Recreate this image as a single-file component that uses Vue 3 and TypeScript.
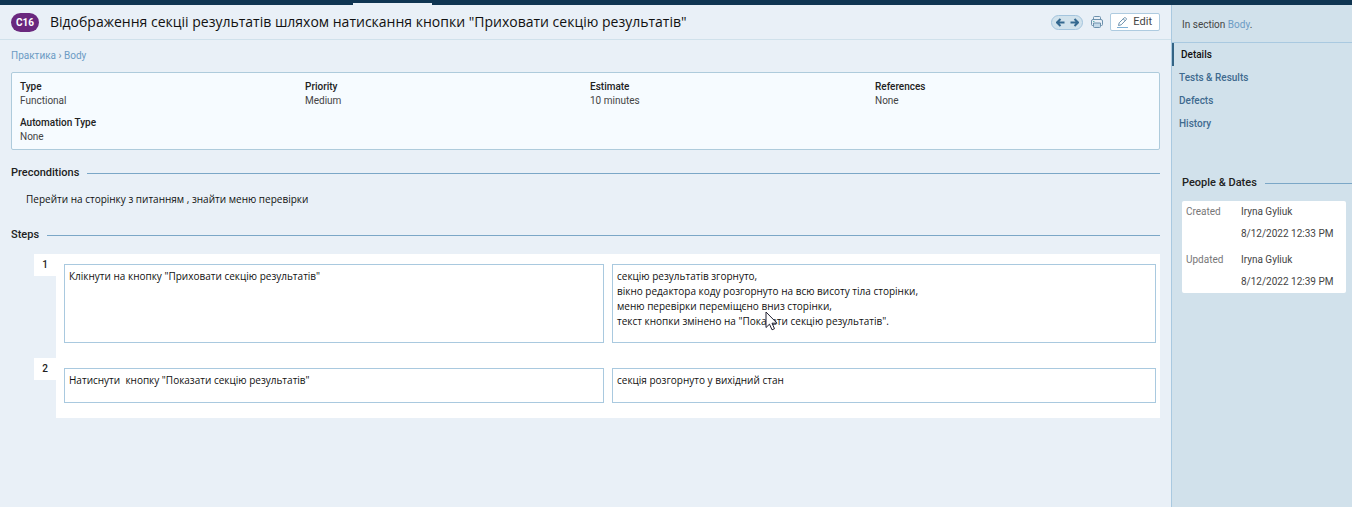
<script setup lang="ts">
import { ref } from 'vue'

interface Field { label: string; value: string }
interface Step { action: string; expected: string[]; tall?: boolean }

const fields: Field[] = [
  { label: 'Type', value: 'Functional' },
  { label: 'Priority', value: 'Medium' },
  { label: 'Estimate', value: '10 minutes' },
  { label: 'References', value: 'None' },
  { label: 'Automation Type', value: 'None' },
]

const steps: Step[] = [
  {
    action: 'Клікнути на кнопку "Приховати секцію результатів"',
    expected: [
      'секцію результатів згорнуто,',
      'вікно редактора коду розгорнуто на всю висоту тіла сторінки,',
      'меню перевірки переміщєно вниз сторінки,',
      'текст кнопки змінено на "Показати секцію результатів".',
    ],
    tall: true,
  },
  {
    action: 'Натиснути  кнопку "Показати секцію результатів"',
    expected: ['секція розгорнуто у вихідний стан'],
  },
]

const tabs: string[] = ['Details', 'Tests & Results', 'Defects', 'History']
const activeTab = ref('Details')

const history = [
  { label: 'Created', person: 'Iryna Gyliuk', date: '8/12/2022 12:33 PM' },
  { label: 'Updated', person: 'Iryna Gyliuk', date: '8/12/2022 12:39 PM' },
]
</script>

<template>
  <div class="page">
    <div class="topbar"><span class="topbar-tab"></span></div>
    <div class="columns">
      <main class="main">
        <header class="header">
          <span class="badge">C16</span>
          <h1 class="title">Відображення секціі результатів шляхом натискання кнопки "Приховати секцію результатів"</h1>
          <div class="pager">
            <button type="button" class="icon-button" aria-label="Previous">
              <svg width="9" height="9" viewBox="0 0 9 9"><path d="M8.5 4.5H1M4.5 1L1 4.5L4.5 8" /></svg>
            </button>
            <button type="button" class="icon-button" aria-label="Next">
              <svg width="9" height="9" viewBox="0 0 9 9"><path d="M.5 4.5H8M4.5 1L8 4.5L4.5 8" /></svg>
            </button>
          </div>
          <button type="button" class="icon-button print" aria-label="Print">
            <svg width="12" height="12" viewBox="0 0 12 12">
              <path d="M2.5 3.5V1.5Q2.5.5 3.5.5H8.5Q9.5.5 9.5 1.5V3.5" />
              <path d="M2.5 9.5H1.5Q.5 9.5.5 8.5V5Q.5 3.5 2 3.5H10Q11.5 3.5 11.5 5V8.5Q11.5 9.5 10.5 9.5H9.5" />
              <path class="sheet" d="M2.5 7H9.5V10.5Q9.5 11.5 8.5 11.5H3.5Q2.5 11.5 2.5 10.5Z" />
              <path class="light" d="M2 5.5H3.5" />
            </svg>
          </button>
          <button type="button" class="edit">
            <svg width="11" height="11" viewBox="0 0 11 11">
              <path d="M1.5 8.5L2.2 5.8L7.3.8Q8 .3 8.7.9L9.2 1.4Q9.7 2.1 9.2 2.7L4.2 7.8ZM6.3 1.9L8.2 3.8" />
              <path class="base" d="M0 10.5H11" />
            </svg>
            Edit
          </button>
        </header>

        <div class="content">
          <nav class="crumbs" aria-label="Breadcrumb">
            <a href="#">Практика</a> › <a href="#">Body</a>
          </nav>

          <dl class="fields">
            <div v-for="field in fields" :key="field.label">
              <dt>{{ field.label }}</dt>
              <dd>{{ field.value }}</dd>
            </div>
          </dl>

          <h2 class="section">Preconditions</h2>
          <p class="precondition">Перейти на сторінку з питанням , знайти меню перевірки</p>

          <h2 class="section">Steps</h2>
          <ol class="steps">
            <li v-for="(step, i) in steps" :key="i" class="step">
              <span class="number">{{ i + 1 }}</span>
              <div class="step-body">
                <div class="box" :class="{ tall: step.tall }">{{ step.action }}</div>
                <div class="box">
                  <div v-for="line in step.expected" :key="line">{{ line }}</div>
                </div>
              </div>
            </li>
          </ol>
        </div>
      </main>

      <aside class="sidebar">
        <p class="location">In section <a href="#">Body</a>.</p>
        <nav class="tabs" aria-label="Test case">
          <a
            v-for="tab in tabs"
            :key="tab"
            href="#"
            :class="{ active: tab === activeTab }"
            @click.prevent="activeTab = tab"
          >{{ tab }}</a>
        </nav>
        <h2 class="section people">People &amp; Dates</h2>
        <table class="dates">
          <tbody v-for="entry in history" :key="entry.label">
            <tr>
              <th scope="row">{{ entry.label }}</th>
              <td>{{ entry.person }}</td>
            </tr>
            <tr>
              <td></td>
              <td>{{ entry.date }}</td>
            </tr>
          </tbody>
        </table>
      </aside>
    </div>
    <svg class="pointer" width="13" height="20" viewBox="0 0 13 20" aria-hidden="true">
      <path d="M1 1V16.5L4.5 13.2L7 18.8L9.5 17.7L7 12.2H12Z" />
    </svg>
  </div>
</template>

<style>
body {
  margin: 0;
  background: #e9f0f7;
}
</style>

<style scoped>
* {
  box-sizing: border-box;
}
.page {
  position: relative;
  display: flex;
  flex-direction: column;
  min-height: 100vh;
  color: #444;
  font: 10px/14px Roboto, "Open Sans", sans-serif;
}
a {
  color: #6c9bc4;
  text-decoration: none;
}
button {
  font: inherit;
  color: inherit;
  cursor: pointer;
}
.topbar {
  display: flex;
  align-items: flex-end;
  height: 5px;
  padding-left: 353px;
  background: #0f3552;
}
.topbar-tab {
  width: 79px;
  height: 2px;
  background: #e9f0f7;
}
.columns {
  display: flex;
  flex: 1;
}
.main {
  flex: 1;
  min-width: 0;
}
.header {
  display: flex;
  align-items: center;
  height: 35px;
  padding: 0 11px;
  border-bottom: 1px solid #d0e1eb;
}
.badge {
  width: 28px;
  border-radius: 10px;
  background: #6a287e;
  color: #fff;
  font-weight: 700;
  line-height: 19px;
  text-align: center;
}
.title {
  flex: 1;
  margin: 0 0 0 11px;
  color: #111;
  font: 500 14px/18px "Open Sans", sans-serif;
  white-space: nowrap;
}
.pager {
  display: flex;
  align-items: center;
  justify-content: center;
  gap: 5px;
  width: 32px;
  height: 15px;
  margin-right: 8px;
  border: 1px solid #a3c4dd;
  border-radius: 8px;
  background: #d1e2ec;
}
.icon-button {
  display: flex;
  padding: 0;
  border: 0;
  background: none;
}
.icon-button path {
  fill: none;
  stroke: #34688f;
  stroke-width: 2;
}
.print {
  margin-right: 7px;
}
.print path {
  stroke: #6d91ad;
  stroke-width: 1;
}
.print .sheet {
  fill: #c3d9e8;
}
.print .light {
  stroke: #5fb8b0;
}
.edit {
  display: flex;
  align-items: center;
  gap: 5px;
  height: 18px;
  padding: 0 7px 0 6px;
  border: 1px solid #aecbe0;
  border-radius: 2px;
  background: #fff;
  font-size: 11px;
}
.edit path {
  fill: none;
  stroke: #6d91ad;
}
.edit .base {
  stroke: #7fb0d5;
}
.content {
  padding: 8px 11px 0;
}
.crumbs {
  line-height: 16px;
  color: #6c8ba8;
}
.fields {
  display: grid;
  grid-template-columns: repeat(4, 1fr);
  gap: 8px 1px;
  margin: 8px 0 16px;
  padding: 7px 0 5px 8px;
  border: 1px solid #aecbdc;
  border-radius: 2px;
  background: #f6fbff;
}
dt {
  color: #222;
  font-weight: 500;
}
dd {
  margin: 0;
}
.section {
  display: flex;
  align-items: center;
  gap: 8px;
  margin: 0;
  color: #222;
  font-size: 11px;
  font-weight: 500;
  line-height: 14px;
}
.section::after {
  content: "";
  flex: 1;
  height: 1px;
  background: #7ba7c7;
}
.precondition {
  margin: 12px 15px 22px;
  color: #111;
  font: 10px/14px "Open Sans", sans-serif;
}
.steps {
  margin: 12px 0 0;
  padding: 0 0 0 23px;
  list-style: none;
}
.step {
  display: flex;
  align-items: flex-start;
}
.number {
  width: 22px;
  background: #fff;
  color: #222;
  font-weight: 500;
  line-height: 22px;
  text-align: center;
}
.step-body {
  display: grid;
  flex: 1;
  grid-template-columns: 540fr 544fr;
  gap: 8px;
  padding: 10px 4px 15px 8px;
  background: #fff;
}
.box {
  min-height: 35px;
  padding: 4px;
  border: 1px solid #a9c9df;
  color: #111;
  font: 10px/15px "Open Sans", sans-serif;
  white-space: pre-wrap;
}
.box.tall {
  min-height: 79px;
}
.sidebar {
  width: 181px;
  border-left: 1px solid #a9c9e0;
  background: #d1e1eb;
}
.location {
  height: 38px;
  margin: 0;
  padding: 13px 10px 0;
  border-bottom: 1px solid #a9c9e0;
}
.tabs {
  display: flex;
  flex-direction: column;
}
.tabs a {
  padding-left: 7px;
  color: #3f6a8f;
  font-weight: 500;
  line-height: 23px;
}
.tabs .active {
  border-left: 2px solid #346485;
  color: #111;
}
.people {
  margin: 41px 0 11px 10px;
}
.dates {
  width: 164px;
  margin-left: 10px;
  border-radius: 2px;
  border-spacing: 0;
  background: #fff;
}
.dates th,
.dates td {
  padding: 0;
  line-height: 22px;
  text-align: left;
}
.dates th {
  width: 59px;
  padding-left: 4px;
  color: #777;
  font-weight: 400;
}
.dates tbody + tbody th,
.dates tbody + tbody tr:first-child td {
  padding-top: 4px;
}
.pointer {
  position: absolute;
  left: 765px;
  top: 311px;
  fill: #fff;
  stroke: #222233;
  pointer-events: none;
}
</style>
